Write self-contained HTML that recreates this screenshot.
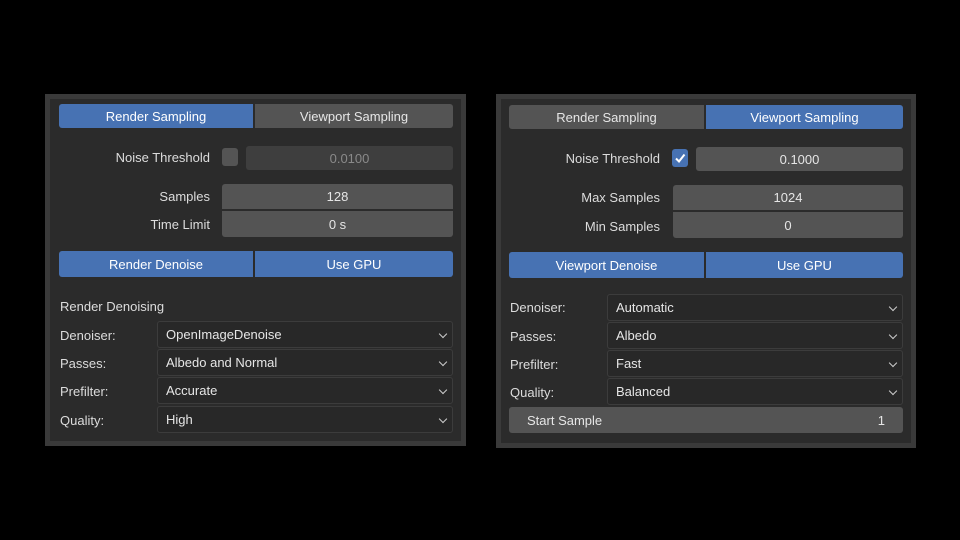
<!DOCTYPE html>
<html><head><style>
body{margin:0;width:960px;height:540px;background:#000;position:relative;overflow:hidden;font-family:"Liberation Sans",sans-serif;font-size:13px;color:#ddd}
.p{position:absolute;background:#2b2b2b;border:5px solid #3a3a3a;box-sizing:border-box}
.a{position:absolute;box-sizing:border-box;display:flex;align-items:center;justify-content:center;border-radius:3px;white-space:nowrap}
.b{background:#4772b3;color:#fff}
.g{background:#545454;color:#e6e6e6}
.f{background:#4a4a4a;color:#e6e6e6}
.d{background:#282828;border:1px solid #3c3c3c;justify-content:flex-start;padding-left:8px;color:#e6e6e6}
.d:after{content:"";position:absolute;right:6px;top:9px;width:5px;height:5px;border-right:1.5px solid #ccc;border-bottom:1.5px solid #ccc;transform:rotate(45deg)}
.l{position:absolute;white-space:nowrap;color:#dcdcdc}
.r{text-align:right}
</style></head><body>
<div class="p" style="left:45px;top:94px;width:421px;height:352px"></div>
<div class="p" style="left:496px;top:94px;width:420px;height:354px"></div>

<!-- left -->
<div class="a b" style="left:59px;top:104px;width:194px;height:24px;border-radius:3px 0 0 3px">Render Sampling</div>
<div class="a g" style="left:255px;top:104px;width:198px;height:24px;border-radius:0 3px 3px 0">Viewport Sampling</div>
<div class="l r" style="left:60px;width:150px;top:150px">Noise Threshold</div>
<div class="a" style="left:222px;top:148px;width:16px;height:18px;background:#545454"></div>
<div class="a f" style="left:246px;top:146px;width:207px;height:24px;background:#3e3e3e;color:#8a8a8a">0.0100</div>
<div class="l r" style="left:60px;width:150px;top:189px">Samples</div>
<div class="a g" style="left:222px;top:184px;width:231px;height:25px;border-radius:3px 3px 0 0">128</div>
<div class="l r" style="left:60px;width:150px;top:217px">Time Limit</div>
<div class="a g" style="left:222px;top:211px;width:231px;height:26px;border-radius:0 0 3px 3px">0 s</div>
<div class="a b" style="left:59px;top:251px;width:194px;height:26px;border-radius:3px 0 0 3px">Render Denoise</div>
<div class="a b" style="left:255px;top:251px;width:198px;height:26px;border-radius:0 3px 3px 0">Use GPU</div>
<div class="l" style="left:60px;top:299px">Render Denoising</div>
<div class="l" style="left:60px;top:328px">Denoiser:</div>
<div class="a d" style="left:157px;top:321px;width:296px;height:27px">OpenImageDenoise</div>
<div class="l" style="left:60px;top:356px">Passes:</div>
<div class="a d" style="left:157px;top:349px;width:296px;height:27px">Albedo and Normal</div>
<div class="l" style="left:60px;top:384px">Prefilter:</div>
<div class="a d" style="left:157px;top:377px;width:296px;height:27px">Accurate</div>
<div class="l" style="left:60px;top:413px">Quality:</div>
<div class="a d" style="left:157px;top:406px;width:296px;height:27px">High</div>

<!-- right -->
<div class="a g" style="left:509px;top:105px;width:195px;height:24px;border-radius:3px 0 0 3px">Render Sampling</div>
<div class="a b" style="left:706px;top:105px;width:197px;height:24px;border-radius:0 3px 3px 0">Viewport Sampling</div>
<div class="l r" style="left:510px;width:150px;top:151px">Noise Threshold</div>
<div class="a" style="left:672px;top:149px;width:16px;height:18px;background:#4772b3"><svg width="12" height="12" viewBox="0 0 12 12"><path d="M2 6.5L5 9.5L10.5 2.5" stroke="#fff" stroke-width="2" fill="none"/></svg></div>
<div class="a g" style="left:696px;top:147px;width:207px;height:24px">0.1000</div>
<div class="l r" style="left:510px;width:150px;top:190px">Max Samples</div>
<div class="a g" style="left:673px;top:185px;width:230px;height:25px;border-radius:3px 3px 0 0">1024</div>
<div class="l r" style="left:510px;width:150px;top:219px">Min Samples</div>
<div class="a g" style="left:673px;top:212px;width:230px;height:26px;border-radius:0 0 3px 3px">0</div>
<div class="a b" style="left:509px;top:252px;width:195px;height:26px;border-radius:3px 0 0 3px">Viewport Denoise</div>
<div class="a b" style="left:706px;top:252px;width:197px;height:26px;border-radius:0 3px 3px 0">Use GPU</div>
<div class="l" style="left:510px;top:300px">Denoiser:</div>
<div class="a d" style="left:607px;top:294px;width:296px;height:27px">Automatic</div>
<div class="l" style="left:510px;top:329px">Passes:</div>
<div class="a d" style="left:607px;top:322px;width:296px;height:27px">Albedo</div>
<div class="l" style="left:510px;top:357px">Prefilter:</div>
<div class="a d" style="left:607px;top:350px;width:296px;height:27px">Fast</div>
<div class="l" style="left:510px;top:385px">Quality:</div>
<div class="a d" style="left:607px;top:378px;width:296px;height:27px">Balanced</div>
<div class="a g" style="left:509px;top:407px;width:394px;height:26px;justify-content:space-between;padding:0 18px">Start Sample<span>1</span></div>
</body></html>
